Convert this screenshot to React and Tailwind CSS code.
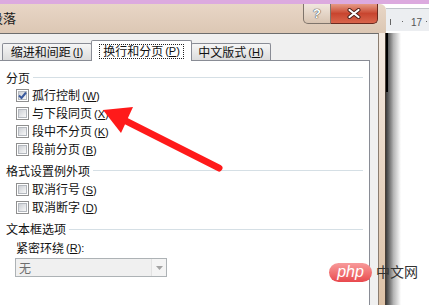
function Box({ checked }) {
  return (
    <span className="relative w-[13px] h-[13px] border border-[#8f8f8f] bg-white p-[1px] flex shrink-0">
      <span className="flex-1 border border-[#b4b8be] bg-gradient-to-br from-[#cdd0d5] to-[#f8f8f8]" />
      {checked && (
        <svg className="absolute left-0 top-0" width="11" height="11" viewBox="0 0 11 11">
          <path d="M2 5.5 L4.5 8 L9 2.5" fill="none" stroke="#3a5a9e" strokeWidth="2" />
        </svg>
      )}
    </span>
  );
}

function Key({ k, tail = "" }) {
  return (
    <span className="ml-[2px] font-['Liberation_Sans',sans-serif] text-[11px]">
      (<span className="underline underline-offset-[1px]">{k}</span>){tail}
    </span>
  );
}

function Check({ label, k, checked }) {
  return (
    <div className="h-[18px] flex items-center pl-[16px] gap-[3px]">
      <Box checked={checked} />
      <span className="leading-none">
        {label}
        <Key k={k} />
      </span>
    </div>
  );
}

function Group({ title, className = "" }) {
  return (
    <div className={`h-[17px] flex items-center px-[6px] gap-[3px] ${className}`}>
      <span className="leading-none">{title}</span>
      <span className="flex-1 h-px bg-[#d5dfe5]" />
    </div>
  );
}

function Tab({ label, k, selected, className = "" }) {
  if (selected) {
    return (
      <div className={`h-[21px] bg-white border border-b-0 border-[#898c95] rounded-t-[2px] flex items-center justify-center ${className}`}>
        <span className="border border-dotted border-[#222] h-[15px] px-[3px] flex items-center leading-none">
          {label}
          <Key k={k} />
        </span>
      </div>
    );
  }
  return (
    <div className={`h-[17px] mb-[1px] bg-gradient-to-b from-[#f6f6f6] to-[#dcdcdc] border border-b-0 border-[#898c95] rounded-t-[2px] flex items-center justify-center leading-none ${className}`}>
      {label}
      <Key k={k} />
    </div>
  );
}

export default function App() {
  return (
    <div className="w-[429px] h-[305px] overflow-hidden relative bg-white flex flex-col text-[12px] text-[#111] font-['Noto_Sans_CJK_SC','Liberation_Sans',sans-serif]">
      <div className="h-[4px] bg-[#dcaadf] shrink-0" />

      <div className="flex flex-1 min-h-0">
        {/* dialog */}
        <div className="w-[386px] flex flex-col">
          <div className="h-[29px] shrink-0 flex items-start bg-gradient-to-b from-[#e8d6c6] to-[#dcc7b4] rounded-tr-[6px] overflow-hidden">
            <span className="ml-[-10px] mt-[7px] text-[13px] leading-none whitespace-nowrap text-[#1a1a1a]">段落</span>
            <div className="flex-1" />
            <div className="flex mr-[8px]">
              <div className="w-[28px] h-[20px] border border-t-0 border-[#7f746b] rounded-bl-[5px] bg-gradient-to-b from-[#f1e7de] to-[#d8c4b2] flex items-center justify-center">
                <span className="text-white font-bold text-[13px] leading-none font-['Liberation_Sans',sans-serif] [text-shadow:0_0_1px_#333,0_0_1px_#333]">?</span>
              </div>
              <div className="w-[47px] h-[20px] border border-t-0 border-l-0 border-[#6a2a20] rounded-br-[5px] bg-gradient-to-b from-[#e59a86] via-[#c8452f] to-[#d9654c] flex items-center justify-center">
                <svg width="14" height="11" viewBox="0 0 14 11">
                  <path d="M2.5 2 L11.5 9 M11.5 2 L2.5 9" stroke="#4a1e18" strokeWidth="4" strokeLinecap="round" />
                  <path d="M2.5 2 L11.5 9 M11.5 2 L2.5 9" stroke="#ffffff" strokeWidth="2.2" strokeLinecap="round" />
                </svg>
              </div>
            </div>
          </div>

          <div className="flex flex-1 min-h-0">
            <div className="w-[379px] bg-[#f0f0f0] border-t border-t-[#6d6d6d] border-r border-r-[#8b7d70] flex flex-col pt-[6px]">
              <div className="flex items-end pl-[2px] h-[21px] relative z-10 shrink-0">
                <Tab label="缩进和间距" k="I" className="w-[90px]" />
                <Tab label="换行和分页" k="P" selected className="w-[101px] ml-[-1px]" />
                <Tab label="中文版式" k="H" className="w-[80px] ml-[-1px]" />
              </div>
              <div className="w-[370px] flex-1 bg-white border-t border-r border-[#898c95] mt-[-1px] pt-[8px] flex flex-col">
                <Group title="分页" />
                <Check label="孤行控制" k="W" checked />
                <Check label="与下段同页" k="X" />
                <Check label="段中不分页" k="K" />
                <Check label="段前分页" k="B" />
                <Group title="格式设置例外项" className="mt-[3px] h-[19px]" />
                <Check label="取消行号" k="S" />
                <Check label="取消断字" k="D" />
                <Group title="文本框选项" className="mt-[4px] h-[18px]" />
                <div className="h-[18px] mt-[1px] flex items-center pl-[16px] leading-none">
                  紧密环绕<Key k="R" tail=":" />
                </div>
                <div className="ml-[15px] mt-[1px] w-[152px] h-[19px] border border-[#adb2b5] bg-[#f0f0f0] flex">
                  <span className="flex-1 pl-[3px] flex items-center text-[#6d6d6d] leading-none">无</span>
                  <span className="w-[15px] border-l border-[#e2e2e2] bg-[#f4f4f4] flex items-center justify-center">
                    <svg width="7" height="4" viewBox="0 0 7 4">
                      <path d="M0 0 L7 0 L3.5 4 Z" fill="#a3a3a3" />
                    </svg>
                  </span>
                </div>
              </div>
            </div>
            <div className="w-[7px] bg-gradient-to-b from-[#f5ebe2] to-[#dcc1a6] border-r border-[#4b3f35]" />
          </div>
        </div>

        {/* document behind */}
        <div className="flex-1 flex flex-col">
          <div className="mt-[4px] h-[23px] bg-[#eceef1] border-t border-[#c0c5cc] relative text-[10px] text-[#555] font-['Liberation_Sans',sans-serif] leading-none">
            <span className="absolute left-[4px] top-[10px] w-px h-[6px] bg-[#666]" />
            <span className="absolute left-[16px] top-[12px] w-px h-px bg-[#666]" />
            <span className="absolute left-[25px] top-[9px]">17</span>
            <span className="absolute left-[40px] top-[12px] w-px h-px bg-[#666]" />
          </div>
          <div className="mt-[2px] flex-1 relative bg-white">
            <div className="absolute left-0 top-0 bottom-0 w-[15px] bg-gradient-to-r from-[#3d3d3d] via-[#b5b5b5] to-white" />
            <div className="absolute left-0 top-0 h-[59px] w-[2px] bg-black" />
          </div>
        </div>
      </div>

      {/* red arrow annotation */}
      <svg className="absolute left-0 top-0 pointer-events-none" width="429" height="305" viewBox="0 0 429 305">
        <line x1="122" y1="119" x2="219" y2="168" stroke="#ff1a1a" strokeWidth="7" strokeLinecap="round" />
        <polygon points="103,110 133,107 121,133" fill="#ff1a1a" />
      </svg>

      {/* watermark */}
      <div className="absolute left-[329px] top-[263px] w-[43px] h-[19px] rounded-full bg-gradient-to-b from-[#f79a9b] to-[#e8474d] flex items-center justify-center">
        <span className="text-white italic text-[16px] leading-none font-['Liberation_Sans',sans-serif] mt-[-2px]">php</span>
      </div>
      <span className="absolute left-[376px] top-[264px] text-[14px] leading-none text-[#333]">中文网</span>
    </div>
  );
}
